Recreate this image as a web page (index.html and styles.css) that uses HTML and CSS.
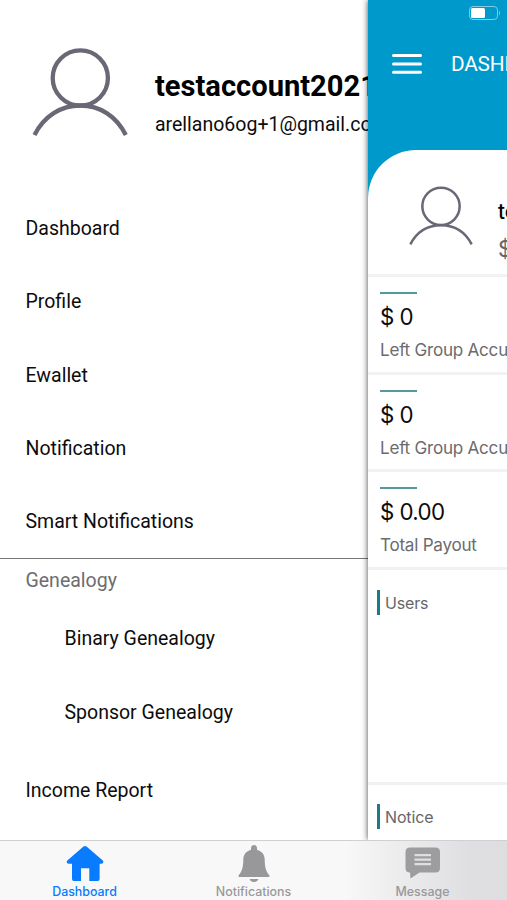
FILE: index.html
```html
<!DOCTYPE html>
<html lang="en">
<head>
<meta charset="utf-8">
<title>Dashboard</title>
<link rel="stylesheet" href="styles.css">
</head>
<body>
<div class="app">
  <div class="panes">
    <aside class="drawer">
      <header class="account">
        <svg class="avatar" viewBox="0 0 96 90" fill="none" stroke="#686876" stroke-width="4.3"><circle cx="48.300" cy="30" r="27.600"/><path d="M2.500 87C12 68 29 57.500 48.300 57.500s36 10.500 45.500 29.500"/></svg>
        <div class="identity">
          <h1>testaccount2021</h1>
          <p>arellano6og+1@gmail.com</p>
        </div>
      </header>
      <nav class="menu">
        <a>Dashboard</a>
        <a>Profile</a>
        <a>Ewallet</a>
        <a>Notification</a>
        <a>Smart Notifications</a>
      </nav>
      <nav class="group">
        <h2>Genealogy</h2>
        <a>Binary Genealogy</a>
        <a>Sponsor Genealogy</a>
      </nav>
      <nav class="menu reports"><a>Income Report</a></nav>
    </aside>
    <main class="page">
      <header class="topbar">
        <div class="status"><svg width="32" height="14" viewBox="0 0 32 14"><rect x=".5" y=".5" width="28" height="13" rx="3.5" fill="none" stroke="#7fcbe5"/><rect x="2" y="2" width="14" height="10" rx="1.5" fill="#fff"/><path d="M30 4.5q2 2.5 0 5z" fill="#7fcbe5"/></svg></div>
        <div class="title">
          <svg width="30" height="20" viewBox="0 0 30 20" stroke="#fff" stroke-width="3" stroke-linecap="round"><path d="M1.5 1.5h27M1.5 9.9h27M1.5 18.3h27"/></svg>
          <span>DASHBOARD</span>
        </div>
      </header>
      <div class="backdrop">
        <section class="profile">
          <svg class="avatar-small" viewBox="0 0 96 90" fill="none" stroke="#686876" stroke-width="3.8"><circle cx="48" cy="30.500" r="28"/><path d="M2 87.500C12 68.500 29 59 48 59s36 9.500 46 28.500"/></svg>
          <div><strong>testaccount2021</strong><span>$ 0</span></div>
        </section>
      </div>
      <section class="stat"><strong>$ 0</strong><span>Left Group Accumulated</span></section>
      <section class="stat"><strong>$ 0</strong><span>Left Group Accumulated</span></section>
      <section class="stat"><strong>$ 0.00</strong><span>Total Payout</span></section>
      <section class="block users"><h3>Users</h3></section>
      <section class="block notice"><h3>Notice</h3></section>
    </main>
  </div>
  <nav class="tabs">
    <a class="active"><svg width="38" height="37" viewBox="0 0 38 37" fill="currentColor"><path d="M17.5 1.500q1.500-1.200 3 0L36.800 15.500q1.100 1.200.3 2.400-.7.800-2 .8h-1.500V34q0 2-2 2h-8.300V23.300h-8.300V36H8q-2 0-2-2V18.700H3q-1.300 0-2-.8-.8-1.200.3-2.400z"/></svg><span>Dashboard</span></a>
    <a><svg width="38" height="37" viewBox="0 0 38 37" fill="currentColor"><path d="M19 0c-2 0-3 1.400-3 3.500v1.200C11 6.300 8.300 9.500 8.300 14.500c0 8-1.500 12-4.400 15.500-.8 1-.4 2 .8 2h28.600c1.200 0 1.600-1 .8-2-2.900-3.500-4.400-7.500-4.400-15.500 0-5-2.700-8.200-7.700-9.800V3.500C22 1.400 21 0 19 0zM14.500 34h9q-1.200 3-4.500 3t-4.500-3z"/></svg><span>Notifications</span></a>
    <a><svg width="38" height="37" viewBox="0 0 38 37" fill="none"><path d="M6 2.500h25.500q4.500 0 4.500 4.500v16q0 4.500-4.500 4.500H15.500L6.500 33.500 6 27.500Q1.500 27.500 1.500 23V7Q1.500 2.500 6 2.500z" fill="#9d9d9f"/><path d="M10.500 10.200h16.500M10.500 14.700h16.500M10.500 19.200h16.500" stroke="#dedee0" stroke-width="2.200"/></svg><span>Message</span></a>
  </nav>
</div>
</body>
</html>
```
FILE: styles.css
```css
* { box-sizing: border-box; }
body, h1, h2, h3, p { margin: 0; }
body { background: #fff; font-family: Roboto, sans-serif; color: #0c0c0e; }
svg { display: block; flex: none; }
.app { width: 507px; height: 900px; display: grid; grid-template-rows: 840px 60px; overflow: hidden; }
.panes { display: grid; grid-template-columns: 368px 139px; overflow: hidden; }
.drawer { overflow: hidden; white-space: nowrap; font-size: 19.5px; }
.account { height: 192px; padding: 48px 0 0 32px; display: flex; gap: 27px; }
.avatar { width: 96px; height: 90px; }
.identity { padding-top: 19px; }
.account h1 { font-size: 29.1px; line-height: 38px; font-weight: 700; color: #000; }
.account p { line-height: 24px; margin-top: 8px; font-size: 19.5px; }
.menu a, .group a { display: block; height: 73.3px; line-height: 74px; padding-left: 25.5px; }
.group { border-top: 1px solid #77777a; height: 195px; }
.group h2 { padding-left: 25.5px; font-size: 19.5px; line-height: 43px; font-weight: 400; color: #6d6d70; }
.group a { padding-left: 64.5px; }
.menu.reports a { height: 73px; line-height: 75px; }
.page { overflow: hidden; background: #fff; white-space: nowrap; box-shadow: 0 0 6px #000b; font-family: Inter, sans-serif; }
.topbar { height: 150px; background: #0099cb; color: #fff; }
.status { height: 36px; padding: 6px 0 0 101px; }
.title { display: flex; align-items: center; gap: 29px; height: 56px; padding-left: 24px; font: 20.8px Roboto, sans-serif; letter-spacing: -.2px; }
.backdrop { background: #0099cb; }
.profile { height: 127px; background: #fff; border-radius: 48px 0 0; border-bottom: 3px solid #f2f2f3; display: flex; gap: 24px; padding: 36px 0 0 41px; }
.avatar-small { width: 64px; height: 60px; }
.profile div { display: grid; grid-template-rows: 37px 37px; align-items: center; margin-top: 7px; margin-left: 1px; }
.profile strong { font: 450 20.5px Inter, sans-serif; color: #000; }
.profile span { font-size: 22.3px; color: #66666a; }
.stat { height: 97.7px; padding: 15px 0 0 12px; border-bottom: 3px solid #f2f2f3; }
.stat::before { content: ""; display: block; width: 37px; height: 2px; background: #54999e; }
.stat strong { display: block; margin-top: 8px; font-size: 22.3px; letter-spacing: -.6px; line-height: 30px; font-weight: 400; }
.stat span { display: block; margin-top: 6px; font-size: 17.1px; letter-spacing: -.25px; line-height: 24px; color: #6b6b6e; }
.block { padding: 20px 0 0 9px; }
.block h3 { height: 25px; border-left: 3px solid #1b7c87; padding-left: 5px; font-size: 16px; letter-spacing: -.15px; line-height: 26px; font-weight: 400; color: #66666a; }
.users { height: 215px; border-bottom: 3px solid #f2f2f3; }
.notice { padding-top: 19px; }
.tabs { display: grid; grid-template-columns: repeat(3, 1fr); border-top: 1px solid #d0d0d2; background: linear-gradient(90deg, #f8f8f8 0 345px, #eeeeef 390px, #dfdfe2 470px, #dedee1); font: 500 12.4px Inter, sans-serif; color: #98989b; }
.tabs a { display: flex; flex-direction: column; align-items: center; padding-top: 4px; }
.tabs span { margin-top: 3px; line-height: 14px; }
.tabs .active { color: #087bff; }
```
